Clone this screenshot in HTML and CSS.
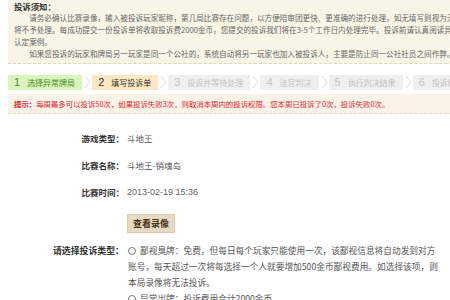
FILE: index.html
```html
<!DOCTYPE html>
<html lang="zh-CN">
<head>
  <meta charset="UTF-8">
  <title>填写投诉单</title>
  <link rel="stylesheet" href="styles.css">
</head>
<body>
  <div class="page">
    <!-- 投诉须知 -->
    <div class="notice">
      <div class="notice-title">投诉须知：</div>
      <p>请务必确认比赛录像，输入被投诉玩家昵称，第几局比赛存在问题，以方便陪审团更快、更准确的进行处理，如无填写则视为无效投诉，</p>
      <p class="cont">将不予处理。每成功提交一份投诉单将收取投诉费2000金币，您提交的投诉我们将在3-5个工作日内处理完毕。投诉前请认真阅读异常牌局</p>
      <p class="cont">认定案例。</p>
      <p>如果您投诉的玩家和牌局另一玩家是同一个公社的，系统自动将另一玩家也加入被投诉人，主要是防止同一公社社员之间作弊。</p>
    </div>

    <!-- 步骤条 -->
    <div class="steps">
      <div class="step done"><span class="num">1</span>选择异常牌局</div>
      <svg class="arrow" width="10" height="16" viewBox="0 0 10 16"><polyline points="3,2 8,8 3,14" fill="none" stroke="#dcdcdc" stroke-width="1"/></svg>
      <div class="step current"><span class="num">2</span>填写投诉单</div>
      <svg class="arrow" width="10" height="16" viewBox="0 0 10 16"><polyline points="3,2 8,8 3,14" fill="none" stroke="#dcdcdc" stroke-width="1"/></svg>
      <div class="step"><span class="num">3</span>投诉并等待处理</div>
      <svg class="arrow" width="10" height="16" viewBox="0 0 10 16"><polyline points="3,2 8,8 3,14" fill="none" stroke="#dcdcdc" stroke-width="1"/></svg>
      <div class="step"><span class="num">4</span>法官判决</div>
      <svg class="arrow" width="10" height="16" viewBox="0 0 10 16"><polyline points="3,2 8,8 3,14" fill="none" stroke="#dcdcdc" stroke-width="1"/></svg>
      <div class="step"><span class="num">5</span>执行判决结果</div>
      <svg class="arrow" width="10" height="16" viewBox="0 0 10 16"><polyline points="3,2 8,8 3,14" fill="none" stroke="#dcdcdc" stroke-width="1"/></svg>
      <div class="step"><span class="num">6</span>投诉结果</div>
    </div>

    <div class="tip"><b>提示：</b>每周最多可以投诉50次，如果投诉失败3次，则取消本周内的投诉权限。您本周已投诉了0次，投诉失败0次。</div>

    <!-- 比赛信息 -->
    <div class="info">
      <div class="label">游戏类型：</div>
      <div class="value">斗地王</div>
      <div class="label">比赛名称：</div>
      <div class="value">斗地王-销魂岛</div>
      <div class="label">比赛时间：</div>
      <div class="value date">2013-02-19 15:36</div>
    </div>

    <div class="btn-row">
      <button type="button" class="btn">查看录像</button>
    </div>

    <div class="type-row">
      <div class="label">请选择投诉类型：</div>
      <div class="options">
        <label class="opt"><input type="radio" name="type">鄙视臭牌：免费，但每日每个玩家只能使用一次，该鄙视信息将自动发到对方<br>账号，每天超过一次将每选择一个人就要增加500金币鄙视费用。如选择该项，则<br>本局录像将无法投诉。</label>
        <label class="opt"><input type="radio" name="type">异常出牌：投诉费用合计2000金币</label>
      </div>
    </div>
  </div>
</body>
</html>
```

FILE: styles.css
```css
body {
  margin: 0;
  overflow: hidden;
  background: #fff;
  font-family: "Noto Sans CJK SC", "Liberation Sans", sans-serif;
  color: #555;
}
.page {
  width: 640px;
  padding-left: 8px;
}
.notice {
  background: #f7f5e6;
  border-bottom: 1px dashed #ddd6b8;
  padding: 0 6px 3px;
  font-size: 7.6px;
  line-height: 12px;
  color: #666;
  white-space: nowrap;
}
.notice-title {
  font-weight: bold;
  font-size: 8.4px;
  color: #333;
}
.notice p {
  margin: 0;
  text-indent: 2em;
}
.notice p.cont {
  text-indent: 0;
}
.steps {
  display: flex;
  align-items: center;
  margin-top: 10px;
  white-space: nowrap;
}
.step {
  display: flex;
  align-items: center;
  height: 15px;
  padding: 0 7px 0 6px;
  background: #efefef;
  color: #c4c4c4;
  font-size: 8px;
}
.step .num {
  font-family: "Liberation Sans", sans-serif;
  font-size: 11px;
  margin-right: 7px;
}
.step.done {
  background: #daf4bb;
  color: #4f8a2c;
}
.step.current {
  background: #fde7c3;
  color: #333;
}
.arrow {
  display: block;
  flex: none;
}
.tip {
  margin-top: 4px;
  background: #fbf2e8;
  border-bottom: 1px dashed #e4d8c0;
  padding: 0 6px;
  height: 19px;
  line-height: 19px;
  font-size: 7.4px;
  color: #e8242c;
  white-space: nowrap;
}
.info {
  display: grid;
  grid-template-columns: 116px auto;
  grid-auto-rows: 27px;
  align-items: center;
  column-gap: 3px;
  margin-top: 10px;
  width: 440px;
}
.label {
  text-align: right;
  font-weight: bold;
  color: #333;
  font-size: 8.5px;
}
.value {
  font-size: 8.5px;
  color: #555;
}
.value.date {
  font-family: "Liberation Sans", sans-serif;
  font-size: 9px;
  color: #666;
}
.btn-row {
  padding: 3px 0 0 119px;
}
.btn {
  width: 48px;
  height: 19px;
  padding: 0;
  background: #e6dac3;
  border: 1px solid #d9ccb2;
  color: #4a3518;
  font-family: "Noto Sans CJK SC", sans-serif;
  font-weight: bold;
  font-size: 9px;
  cursor: pointer;
}
.type-row {
  display: flex;
  margin-top: 10px;
}
.type-row .label {
  width: 116px;
  line-height: 16px;
  font-size: 8.9px;
}
.options {
  padding-left: 4px;
  font-size: 8.7px;
  line-height: 16px;
  color: #555;
  white-space: nowrap;
}
.opt {
  display: block;
}
.opt input {
  width: 8px;
  height: 8px;
  margin: 0 4px 0 0;
  vertical-align: -1px;
}
```
